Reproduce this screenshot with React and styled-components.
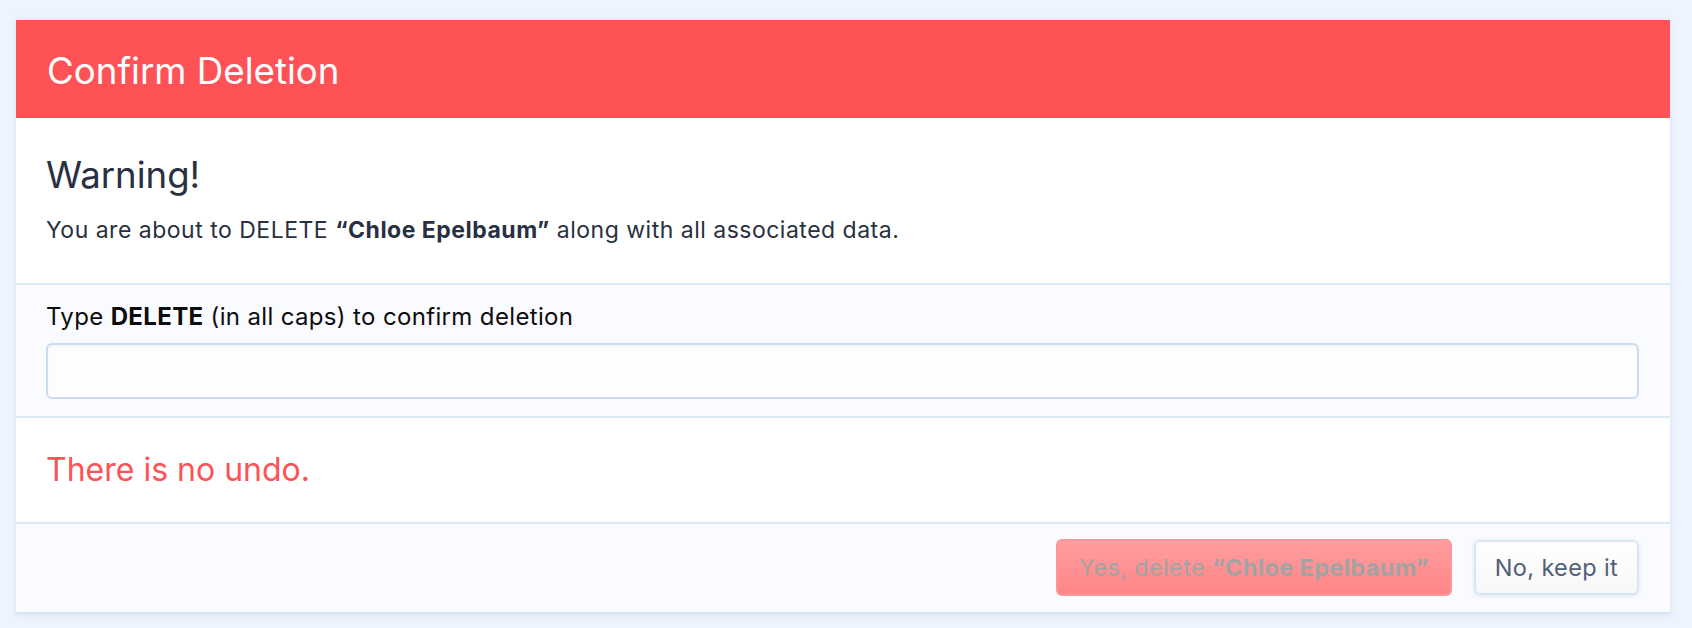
import React from "react";
import styled, { createGlobalStyle } from "styled-components";

const Global = createGlobalStyle`
  html, body { margin: 0; padding: 0; background: #edf4fe; }
  body { font-family: Inter, "Noto Sans", "Liberation Sans", sans-serif; -webkit-font-smoothing: antialiased; }
  * { box-sizing: border-box; }
`;

const Page = styled.div`
  padding: 20px 22px 16px 16px;
`;

const Card = styled.div`
  background: #ffffff;
  border-bottom: 2px solid #d9e6f5;
  box-shadow: 0 1px 6px rgba(140, 170, 210, 0.25);
`;

const Header = styled.div`
  background: #ff5257;
  height: 98px;
  display: flex;
  align-items: center;
  padding: 4px 31px 0;
`;

const Title = styled.h1`
  margin: 0;
  color: #ffffff;
  font-weight: 400;
  font-size: 36.7px;
  line-height: 1;
`;

const Section = styled.div`
  background: ${(p) => (p.$muted ? "#f9fbff" : "#ffffff")};
  border-top: ${(p) => (p.$divided ? "2px solid #dce8f6" : "none")};
  padding: ${(p) => p.$pad};
`;

const Heading = styled.h2`
  margin: 0 0 17px;
  font-weight: 400;
  font-size: 36.6px;
  line-height: 44px;
  color: #283041;
`;

const Text = styled.p`
  margin: 0;
  font-size: 23px;
  letter-spacing: 0.5px;
  line-height: 32px;
  color: #283041;
`;

const Label = styled.label`
  display: block;
  font-size: 24px;
  letter-spacing: 0.35px;
  line-height: 32px;
  color: #0d0d0d;
  margin-bottom: 10px;
`;

const Input = styled.input`
  display: block;
  width: 100%;
  height: 56px;
  border: 2px solid #c9dcf2;
  border-radius: 6px;
  background: #fdfdfe;
  box-shadow: inset 0 2px 3px rgba(0, 0, 0, 0.04);
  outline: none;
  font: inherit;
  font-size: 22px;
  padding: 0 14px;
`;

const Danger = styled.p`
  margin: 0;
  font-size: 32px;
  line-height: 40px;
  color: #ff5257;
`;

const Footer = styled.div`
  background: #f9fbff;
  border-top: 2px solid #dce8f6;
  display: flex;
  justify-content: flex-end;
  align-items: center;
  gap: 22px;
  padding: 15px 31px 16px;
`;

const Button = styled.button`
  font: inherit;
  font-size: 23.5px;
  letter-spacing: 0.35px;
  height: ${(p) => (p.$danger ? "57px" : "55px")};
  padding: ${(p) => (p.$danger ? "0 21px" : "0 19px")};
  border-radius: 6px;
  cursor: ${(p) => (p.disabled ? "not-allowed" : "pointer")};
  color: ${(p) => (p.$danger ? "#a3a3a3" : "#4f6076")};
  background: ${(p) =>
    p.$danger
      ? "linear-gradient(#ff9d9f, #ff8587)"
      : "linear-gradient(#ffffff, #f7f7f7)"};
  border: 2px solid ${(p) => (p.$danger ? "#ff9597" : "#d8e5f4")};
  box-shadow: ${(p) => (p.$danger ? "none" : "0 1px 4px rgba(120, 150, 190, 0.2)")};
  b { font-weight: 700; }
`;

export default function App() {
  const name = "Chloe Epelbaum";
  return (
    <Page>
      <Global />
      <Card>
        <Header>
          <Title>Confirm Deletion</Title>
        </Header>
        <Section $pad="35px 30px 37px">
          <Heading>Warning!</Heading>
          <Text>
            You are about to DELETE <b>“{name}”</b> along with all associated data.
          </Text>
        </Section>
        <Section $muted $divided $pad="16px 31px 17px 30px">
          <Label>
            Type <b>DELETE</b> (in all caps) to confirm deletion
          </Label>
          <Input type="text" />
        </Section>
        <Section $divided $pad="32px 30px 32px">
          <Danger>There is no undo.</Danger>
        </Section>
        <Footer>
          <Button $danger disabled>
            Yes, delete <b>“{name}”</b>
          </Button>
          <Button>No, keep it</Button>
        </Footer>
      </Card>
    </Page>
  );
}
